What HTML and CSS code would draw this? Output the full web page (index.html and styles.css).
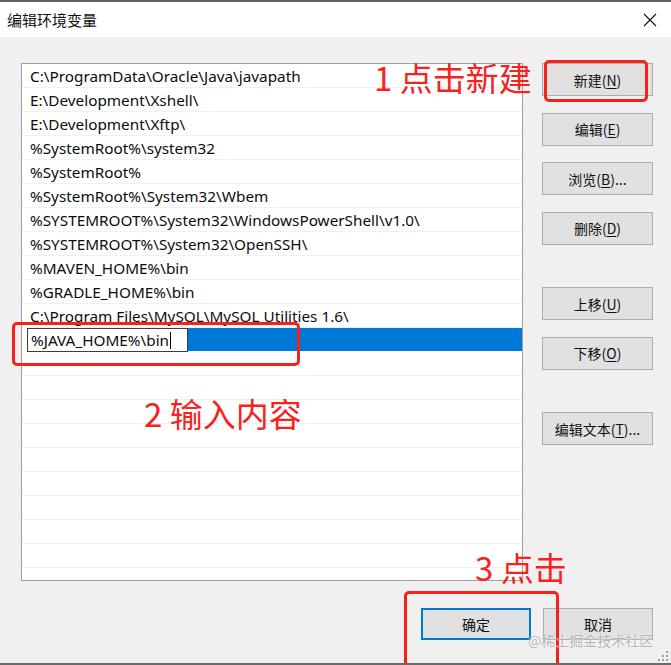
FILE: index.html
```html
<!DOCTYPE html>
<html lang="zh-CN">
  <head>
    <meta charset="UTF-8" />
    <title>编辑环境变量</title>
    <link rel="stylesheet" href="styles.css">
  </head>
  <body>
    <div class="window">
      <div class="titlebar">
        <span class="title">编辑环境变量</span>
        <svg class="close" width="14" height="14" viewBox="0 0 14 14">
          <path d="M1 1 L13 13 M13 1 L1 13" stroke="#111" stroke-width="1.1" fill="none" />
        </svg>
      </div>

      <div class="content">
        <div class="main">
          <div class="list">
            <div class="row">C:\ProgramData\Oracle\Java\javapath</div>
            <div class="row">E:\Development\Xshell\</div>
            <div class="row">E:\Development\Xftp\</div>
            <div class="row">%SystemRoot%\system32</div>
            <div class="row">%SystemRoot%</div>
            <div class="row">%SystemRoot%\System32\Wbem</div>
            <div class="row">%SYSTEMROOT%\System32\WindowsPowerShell\v1.0\</div>
            <div class="row">%SYSTEMROOT%\System32\OpenSSH\</div>
            <div class="row">%MAVEN_HOME%\bin</div>
            <div class="row">%GRADLE_HOME%\bin</div>
            <div class="row">C:\Program Files\MySQL\MySQL Utilities 1.6\</div>
            <div class="row editing">
              <span class="edit-box">%JAVA_HOME%\bin<span class="caret"></span></span>
              <span class="selected-fill"></span>
            </div>
            <div class="row"></div>
            <div class="row"></div>
            <div class="row"></div>
            <div class="row"></div>
            <div class="row"></div>
            <div class="row"></div>
            <div class="row"></div>
            <div class="row"></div>
            <div class="row last"></div>
          </div>

          <div class="side">
            <button class="btn">新建(<u>N</u>)</button>
            <button class="btn">编辑(<u>E</u>)</button>
            <button class="btn">浏览(<u>B</u>)...</button>
            <button class="btn">删除(<u>D</u>)</button>
            <button class="btn group">上移(<u>U</u>)</button>
            <button class="btn">下移(<u>O</u>)</button>
            <button class="btn group">编辑文本(<u>T</u>)...</button>
          </div>
        </div>

        <div class="footer">
          <button class="btn default">确定</button>
          <button class="btn">取消</button>
        </div>
      </div>

      <!-- 标注 -->
      <div class="note note-1">1 点击新建</div>
      <div class="note note-2">2 输入内容</div>
      <div class="note note-3">3 点击</div>
      <div class="mark mark-1"></div>
      <div class="mark mark-2"></div>
      <div class="mark mark-3"></div>

      <div class="watermark">@稀土掘金技术社区</div>
      <svg class="grip" width="12" height="12" viewBox="0 0 12 12">
        <rect x="9" y="1" width="2" height="2" fill="#a0a0a0" />
        <rect x="5" y="5" width="2" height="2" fill="#a0a0a0" />
        <rect x="9" y="5" width="2" height="2" fill="#a0a0a0" />
        <rect x="1" y="9" width="2" height="2" fill="#a0a0a0" />
        <rect x="5" y="9" width="2" height="2" fill="#a0a0a0" />
        <rect x="9" y="9" width="2" height="2" fill="#a0a0a0" />
      </svg>
    </div>
  </body>
</html>
```

FILE: styles.css
```css
html,
body {
  margin: 0;
  padding: 0;
}

body {
  font-family: 'Noto Sans', 'Noto Sans CJK SC', sans-serif;
  color: #000;
  background: #f0f0f0;
  overflow: hidden;
}

.window {
  position: relative;
  width: 671px;
  height: 665px;
  box-sizing: border-box;
  border-top: 2px solid #5f5f5f;
  border-bottom: 2px solid #6a6a6a;
  background: #f0f0f0;
  overflow: hidden;
}

.titlebar {
  height: 35px;
  background: #fff;
  display: flex;
  align-items: center;
  justify-content: space-between;
  padding: 0 14px 0 7px;
}

.title {
  font-family: 'Noto Sans CJK SC', sans-serif;
  font-size: 15px;
  color: #111;
}

.content {
  padding: 26px 18px 0 21px;
}

.main {
  display: flex;
  gap: 19px;
}

/* 列表 */
.list {
  width: 500px;
  height: 516px;
  border: 1px solid #a0a0a0;
  background: #fff;
  overflow: hidden;
}

.row {
  height: 24px;
  box-sizing: border-box;
  border-bottom: 1px solid #f0f0f0;
  padding: 1px 0 0 8px;
  font-size: 15.3px;
  line-height: 23px;
  white-space: nowrap;
  color: #0c0c0c;
}

.row.editing {
  display: flex;
  padding: 0 0 0 5px;
  border-bottom: none;
  height: 24px;
}

.edit-box {
  box-sizing: border-box;
  width: 161px;
  height: 24px;
  border: 1px solid #3c3c3c;
  background: #fff;
  padding-left: 3px;
  line-height: 22px;
}

.caret {
  display: inline-block;
  width: 1px;
  height: 17px;
  background: #000;
  vertical-align: -3px;
  margin-left: 1px;
}

.selected-fill {
  flex: 1;
  height: 23px;
  background: #0078d7;
}

/* 按钮 */
.side {
  display: flex;
  flex-direction: column;
  gap: 16.5px;
}

.side .btn.group {
  margin-top: 26px;
}

.btn {
  width: 111px;
  height: 33px;
  box-sizing: border-box;
  border: 1px solid #adadad;
  background: #e1e1e1;
  font-family: 'Noto Sans CJK SC', sans-serif;
  font-size: 14px;
  color: #111;
  padding: 0;
}

.btn u {
  text-decoration-thickness: 1px;
  text-underline-offset: 2px;
}

.footer {
  display: flex;
  justify-content: flex-end;
  gap: 12px;
  margin-top: 27px;
}

.footer .btn {
  width: 110px;
  height: 32px;
}

.btn.default {
  border: 2px solid #0078d7;
}

/* 红色标注 */
.note {
  position: absolute;
  font-family: 'Noto Sans CJK SC', sans-serif;
  font-size: 33px;
  line-height: 1;
  color: #f8211c;
  white-space: nowrap;
}

.note-1 {
  left: 374px;
  top: 59px;
}

.note-2 {
  left: 144px;
  top: 395px;
}

.note-3 {
  left: 475px;
  top: 549px;
}

.mark {
  position: absolute;
  border: 3px solid #f5221c;
  border-radius: 5px;
  box-sizing: border-box;
}

.mark-1 {
  left: 544px;
  top: 58px;
  width: 104px;
  height: 42px;
}

.mark-2 {
  left: 12px;
  top: 320px;
  width: 288px;
  height: 44px;
}

.mark-3 {
  left: 404px;
  top: 589px;
  width: 155px;
  height: 82px;
}

.watermark {
  position: absolute;
  left: 528px;
  top: 628px;
  font-family: 'Noto Sans CJK SC', sans-serif;
  font-size: 14px;
  color: rgba(170, 170, 170, 0.85);
  text-shadow: 0 0 2px #fff;
  white-space: nowrap;
}

.grip {
  position: absolute;
  right: 2px;
  bottom: 1px;
}
```
